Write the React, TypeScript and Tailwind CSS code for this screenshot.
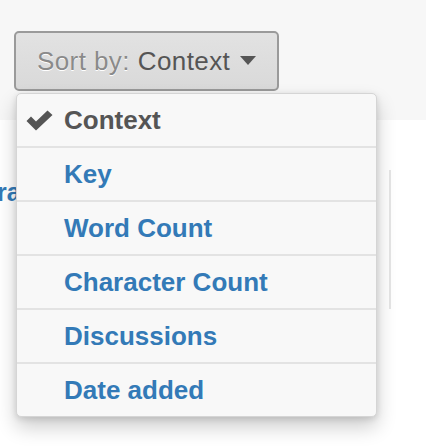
import React from "react";

const options = ["Context", "Key", "Word Count", "Character Count", "Discussions", "Date added"];

function Check() {
  return (
    <svg width="27" height="21" viewBox="0 0 27 21" className="shrink-0">
      <path d="M0.5 11 L5 6.5 L10 11.5 L21.5 0.5 L26.5 5 L10 20.5 Z" fill="#555555" />
    </svg>
  );
}

export default function App() {
  const selected = "Context";

  return (
    <div className="relative w-[426px] h-[448px] overflow-hidden bg-white" style={{ fontFamily: '"Liberation Sans", Arial, sans-serif' }}>
      {/* header band */}
      <div className="h-[120px] bg-[#f7f7f7] pt-[31px] pl-[14px]">
        <button className="flex items-center h-[60px] w-[265px] pl-[21px] rounded-[5px] border-2 border-[#9a9a9a] bg-gradient-to-b from-[#e2e2e2] to-[#d9d9d9] text-[26px] tracking-[0.4px]">
          <span className="text-[#8a8a8a] [text-shadow:0_1px_0_#ffffff]">Sort by:</span>
          <span className="ml-[8px] text-[#555555]">Context</span>
          <svg width="16" height="10" viewBox="0 0 16 10" className="ml-[10px]">
            <path d="M0 0 H16 L8 9 Z" fill="#555555" />
          </svg>
        </button>
      </div>

      {/* content behind the menu */}
      <div className="flex pt-[50px]">
        <div className="w-[391px] h-[139px] border-r-2 border-[#e6e6e6] overflow-hidden">
          <p className="ml-[-3px] mt-[10px] text-[25px] font-bold text-[#337ab7] leading-none">ra</p>
        </div>
      </div>

      {/* dropdown menu */}
      <ul className="absolute left-[16px] top-[93px] w-[361px] rounded-[5px] bg-[#f8f8f8] border border-[#d5d5d5] shadow-[0_10px_20px_rgba(0,0,0,0.2),0_2px_6px_rgba(0,0,0,0.12)]">
        {options.map((opt, idx) => (
          <li
            key={opt}
            className={`flex items-center pl-[9px] text-[26px] font-bold ${idx === 0 ? "h-[52px]" : "h-[54px] border-t-2 border-[#e3e3e3]"}`}
          >
            <span className="w-[38px] flex">{opt === selected && <Check />}</span>
            <span className={opt === selected ? "text-[#555555]" : "text-[#337ab7]"}>{opt}</span>
          </li>
        ))}
      </ul>
    </div>
  );
}
